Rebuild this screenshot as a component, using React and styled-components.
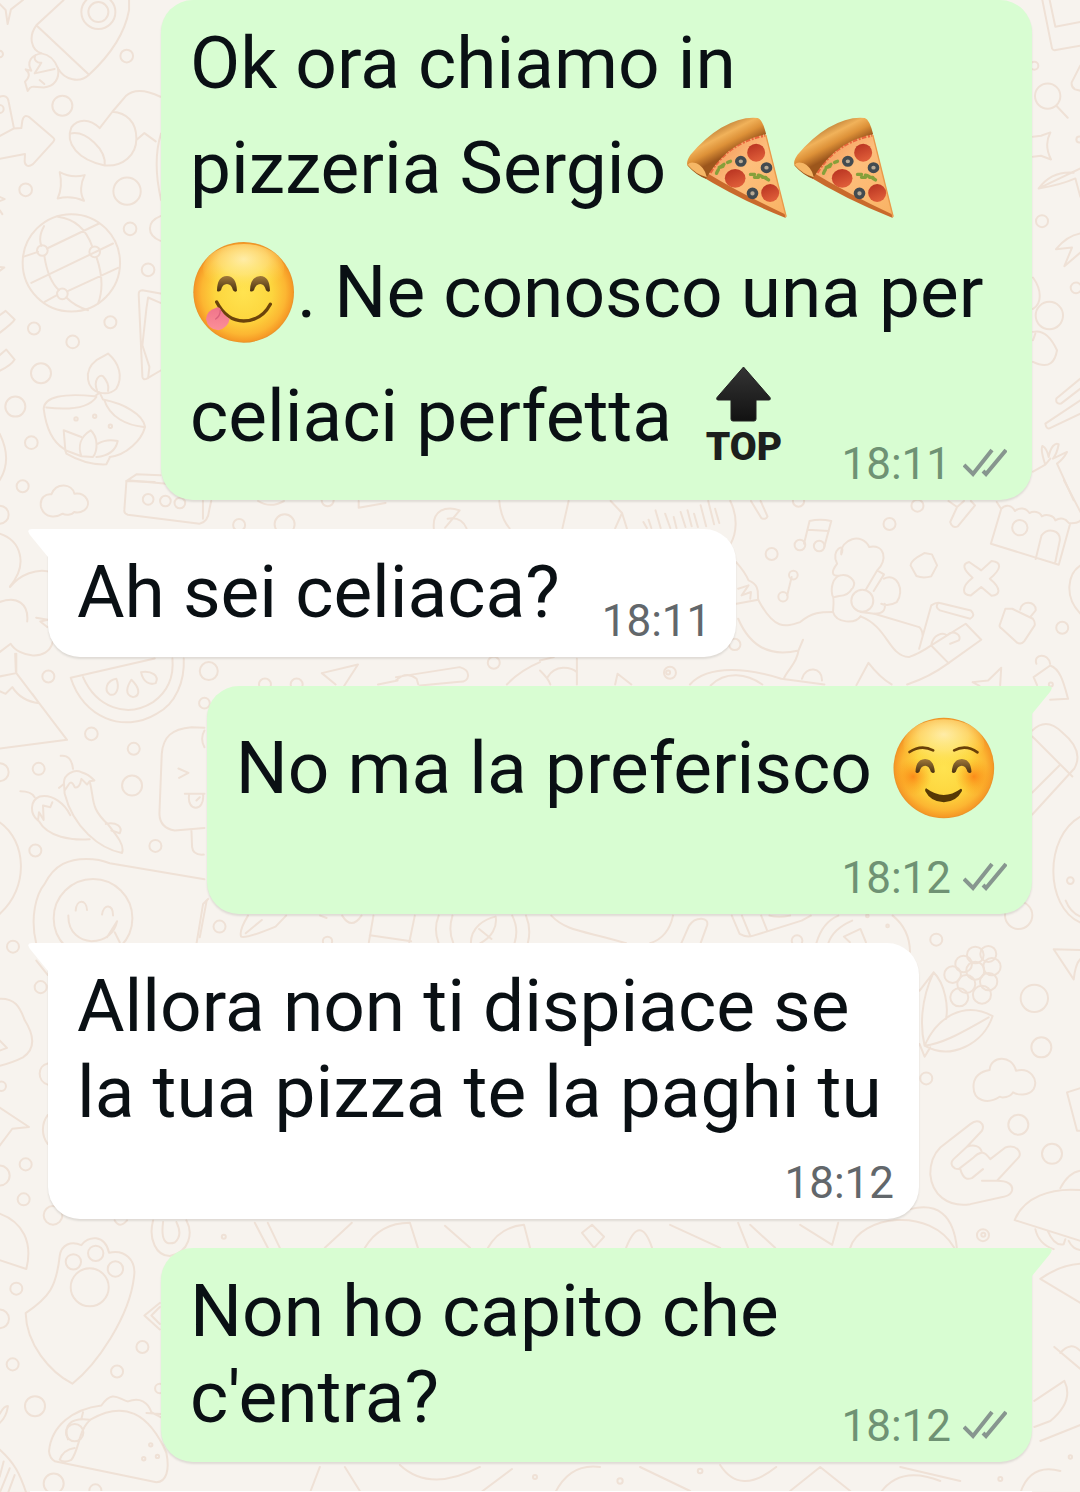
import React from 'react';
import styled, { createGlobalStyle, css } from 'styled-components';

const GlobalStyle = createGlobalStyle`
  *, *::before, *::after { box-sizing: border-box; }
  body { margin: 0; background: #f7f3ee; }
`;

const Page = styled.main`
  position: relative;
  min-height: 100vh;
  overflow: hidden;
  background: #f7f3ee;
  font-family: Roboto, "Liberation Sans", sans-serif;
`;

const Wallpaper = styled.svg`
  position: absolute;
  inset: 0;
  width: 100%;
  height: 100%;
  fill: none;
  stroke: #efe1d6;
  stroke-linecap: round;
  stroke-linejoin: round;

  path, circle, ellipse {
    vector-effect: non-scaling-stroke;
    stroke-width: 2px;
  }
`;

const Thread = styled.div`
  position: relative;
  display: flex;
  flex-direction: column;
  gap: 29px;
  padding: 0 48px;
`;

const layouts = {
  over: css`
    display: grid;
    > p, > footer { grid-area: 1 / 1; }
  `,
  beside: css`
    display: flex;
    align-items: flex-end;
    gap: 32px;
  `,
  below: css`
    display: flex;
    flex-direction: column;
    gap: 10px;
  `,
};

const Bubble = styled.article`
  position: relative;
  max-width: 871px;
  padding: 20px 25px 10px 29px;
  border-radius: 32px;
  align-self: ${(p) => (p.$sent ? 'flex-end' : 'flex-start')};
  color: ${(p) => (p.$sent ? '#6f9274' : '#62676b')};
  background: ${(p) => (p.$sent ? '#d8fdd2' : '#ffffff')};
  box-shadow: 0 2px 2px rgba(60, 50, 40, 0.12);
  ${(p) => p.$tail && (p.$sent ? 'border-top-right-radius: 0;' : 'border-top-left-radius: 0;')}
  ${(p) => layouts[p.$layout]}
`;

const TailShape = styled.svg`
  position: absolute;
  top: 0;
  width: 22px;
  height: 30px;
  ${(p) => (p.$sent ? 'right: -20px; transform: scaleX(-1); fill: #d8fdd2;' : 'left: -20px; fill: #ffffff;')}
`;

const Text = styled.p`
  margin: 0 0 12px;
  padding-right: 10px;
  color: #0a1014;
  font-size: 73px;
  line-height: 86px;
`;

const Meta = styled.footer`
  display: flex;
  align-items: center;
  align-self: end;
  justify-self: end;
  gap: 12px;
  height: 52px;
  font-size: 44px;
  line-height: 52px;
`;

const TickIcon = styled.svg`
  width: 44px;
  height: 34px;
  fill: none;
  stroke: #87968f;
  stroke-width: 4px;
`;

const EmojiArt = styled.svg`
  width: 107px;
  height: 102px;
  margin: 11px 0;
  overflow: visible;
  vertical-align: -37px;
`;

const PeekBubble = styled.div`
  align-self: stretch;
  height: 2px;
  margin-left: -18px;
  background: #ffffff;
`;

function Tail({ sent }) {
  return (
    <TailShape $sent={sent} viewBox="0 0 22 30" aria-hidden="true">
      <path d="M4 0H22V30L20 28L2 6Q-2 0 4 0Z" />
    </TailShape>
  );
}

function Ticks() {
  return (
    <TickIcon viewBox="0 0 44 34" role="img" aria-label="Consegnato">
      <path d="M1 18L10 27L29 3M20 24L23 27L43 3" />
    </TickIcon>
  );
}

function Pizza() {
  return (
    <EmojiArt viewBox="0 0 107 102" role="img" aria-label="pizza">
      <defs>
        <linearGradient id="crust" gradientUnits="userSpaceOnUse" x1="120" y1="85" x2="158" y2="158">
          <stop offset="0" stopColor="#c98a3e" />
          <stop offset=".3" stopColor="#f1b25a" />
          <stop offset=".62" stopColor="#dd9138" />
          <stop offset="1" stopColor="#9c561c" />
        </linearGradient>
        <linearGradient id="cheese" x1="0" y1="0" x2="1" y2="1">
          <stop offset="0" stopColor="#f08a50" />
          <stop offset=".45" stopColor="#fdbf7c" />
          <stop offset="1" stopColor="#f9b263" />
        </linearGradient>
        <linearGradient id="salami" x1="0" y1="0" x2=".4" y2="1">
          <stop offset="0" stopColor="#b5301f" />
          <stop offset="1" stopColor="#de5c38" />
        </linearGradient>
      </defs>
      <g transform="translate(-5.5 -17) scale(.3333)">
        <path d="M82 226L324 352L262 103Q160 115 82 226Z" fill="url(#cheese)" />
        <path d="M58 222Q180 298 322 354L318 342Q190 282 84 218Z" fill="#c96a2c" />
        <path d="M95 218Q150 126 260 106" fill="none" stroke="#e9653c" strokeWidth="9" strokeDasharray="14 5 6 4" />
        <path d="M27 197Q22 184 36 164Q80 112 128 83Q190 48 238 54Q252 58 263 103Q205 112 151 153Q110 188 82 236Q54 226 27 197Z" fill="url(#crust)" />
        <path d="M28 194Q34 184 54 190Q78 200 85 232Q50 222 28 194Z" fill="#f6b766" />
        <path d="M262 105L323 350" fill="none" stroke="#e99a4b" strokeWidth="4" />
        <g fill="url(#salami)">
          <circle cx="233" cy="158" r="27" />
          <ellipse cx="170" cy="235" rx="31" ry="28" />
          <circle cx="275" cy="279" r="27" />
        </g>
        <g fill="#b9aa94" stroke="#434b50" strokeWidth="11">
          <ellipse cx="187" cy="184" rx="12" ry="11" />
          <ellipse cx="264" cy="203" rx="12" ry="11" />
          <ellipse cx="222" cy="280" rx="12" ry="12" />
        </g>
        <g fill="none" stroke="#86a03a" strokeWidth="10" strokeLinecap="round" strokeDasharray="12 12">
          <path d="M114 220Q124 194 156 184" />
          <path d="M122 202L144 196" />
          <path d="M216 223Q244 222 270 240" />
          <path d="M228 232L262 232" />
        </g>
      </g>
    </EmojiArt>
  );
}

function FaceDefs() {
  return (
    <defs>
      <radialGradient id="skin" cx=".5" cy=".5" r=".51">
        <stop offset="0" stopColor="#ffe350" />
        <stop offset=".55" stopColor="#fdd63e" />
        <stop offset=".82" stopColor="#fcb632" />
        <stop offset=".95" stopColor="#f69a26" />
        <stop offset="1" stopColor="#dc8c2c" />
      </radialGradient>
      <radialGradient id="shine" cx=".5" cy=".3" r=".6">
        <stop offset="0" stopColor="#fff0b4" stopOpacity=".9" />
        <stop offset=".5" stopColor="#ffeb90" stopOpacity=".6" />
        <stop offset="1" stopColor="#ffe455" stopOpacity="0" />
      </radialGradient>
      <linearGradient id="eye" x1="0" y1="0" x2="0" y2="1">
        <stop offset="0" stopColor="#a0793a" />
        <stop offset="1" stopColor="#49300f" />
      </linearGradient>
      <radialGradient id="blush">
        <stop offset="0" stopColor="#fb7a12" stopOpacity=".8" />
        <stop offset="1" stopColor="#fb9a12" stopOpacity="0" />
      </radialGradient>
      <linearGradient id="tongue" x1="0" y1="0" x2="0" y2="1">
        <stop offset="0" stopColor="#f0748a" />
        <stop offset="1" stopColor="#fb8f98" />
      </linearGradient>
    </defs>
  );
}

function YumFace() {
  return (
    <EmojiArt viewBox="0 0 107 102" role="img" aria-label="gustoso">
      <FaceDefs />
      <g transform="translate(-9 -11) scale(.3333)">
        <circle cx="188" cy="187" r="151" fill="url(#skin)" />
        <ellipse cx="188" cy="118" rx="122" ry="76" fill="url(#shine)" />
        <path d="M108 182Q108 139 138 138Q166 139 168 182Q163 189 156 181Q151 162 138 162Q124 162 120 181Q112 188 108 182Z" fill="url(#eye)" />
        <path d="M207 182Q208 139 238 138Q266 139 267 182Q262 189 255 181Q250 162 238 162Q224 162 219 181Q211 188 207 182Z" fill="url(#eye)" />
        <path d="M107 216Q136 272 188 273Q242 272 268 223" fill="none" stroke="#6b430b" strokeWidth="10" strokeLinecap="round" />
        <path d="M104 234Q76 242 75 268Q80 298 112 301Q142 292 146 266Q128 256 116 234Q110 230 104 234Z" fill="url(#tongue)" />
        <path d="M118 240Q118 258 104 267" fill="none" stroke="#d9607c" strokeWidth="4" strokeLinecap="round" />
      </g>
    </EmojiArt>
  );
}

function BlushFace() {
  return (
    <EmojiArt viewBox="0 0 107 102" role="img" aria-label="sorriso">
      <g transform="translate(-9.5 -37) scale(.3333)">
        <circle cx="190" cy="264" r="151" fill="url(#skin)" />
        <ellipse cx="190" cy="194" rx="122" ry="76" fill="url(#shine)" />
        <circle cx="98" cy="290" r="56" fill="url(#blush)" />
        <circle cx="280" cy="290" r="56" fill="url(#blush)" />
        <path d="M87 216Q122 192 158 211M221 211Q256 192 291 217" fill="none" stroke="#694008" strokeWidth="8" strokeLinecap="round" />
        <path d="M105 276Q106 238 134 237Q160 238 163 276Q158 283 151 275Q146 257 134 257Q121 257 117 275Q110 283 105 276Z" fill="url(#eye)" />
        <path d="M214 276Q216 238 244 237Q271 238 273 276Q268 283 261 275Q256 257 244 257Q231 257 226 275Q219 283 214 276Z" fill="url(#eye)" />
        <path d="M137 325Q189 364 241 326Q246 326 244 334Q227 366 190 367Q151 366 134 333Q133 326 137 325Z" fill="#563805" />
      </g>
    </EmojiArt>
  );
}

const TopLabel = styled.text`
  font: 900 39px Roboto, sans-serif;
  text-anchor: middle;
  fill: #1c1f1d;
`;

function TopArrow() {
  return (
    <EmojiArt viewBox="0 0 107 102" role="img" aria-label="top">
      <defs>
        <linearGradient id="arrow" x1="0" y1="0" x2="0" y2="1">
          <stop offset="0" stopColor="#343434" />
          <stop offset="1" stopColor="#121212" />
        </linearGradient>
      </defs>
      <path
        d="M53.5 2L80 32.5Q81 35 79 35H66V54Q66 56 64 56H43Q41 56 41 54V35H28Q26 35 27 32.5Z"
        fill="url(#arrow)"
        stroke="#222"
        strokeLinejoin="round"
      />
      <TopLabel x="54" y="95">TOP</TopLabel>
    </EmojiArt>
  );
}

/* One region of doodles, drawn in its own local units. */
function Doodles({ x, y, sx = 3, sy = 3, paths, dots = [] }) {
  return (
    <g transform={`translate(${x} ${y}) scale(${1 / sx} ${1 / sy})`}>
      {paths.map((d) => <path key={d} d={d} />)}
      {dots.map(([cx, cy, r]) => (
        <ellipse key={`${cx}-${cy}`} cx={cx} cy={cy} rx={(r * sx) / 3} ry={(r * sy) / 3} />
      ))}
    </g>
  );
}

const regions = [
  {
    x: 0, y: 0,
    dots: [[296,36,51],[296,36,30],[381,168,19],[188,317,30],[78,569,19],[382,573,41],[391,686,19],[445,809,19],[332,966,18],[103,985,18],[219,1025,19],[124,1119,30],[47,1219,30],[95,1327,19],[69,1458,18],[215,788,146],[128,751,16],[285,755,16],[188,881,16],[229,1256,5],[285,1248,5],[332,1278,5],[0,162,10],[0,327,12]],
    paths: [
      'M0 12L18 30L24 72L34 28L70 0',
      'M192 0L110 76C85 110 95 150 125 160Q160 165 175 205C195 240 240 250 268 224Q370 130 388 30L388 0M110 76L268 224',
      'M125 160C95 165 80 185 95 212L78 208Q98 225 76 245L84 273C95 252 105 262 132 262C165 260 180 235 175 205M108 165C98 180 115 190 125 188L105 220L165 207M120 240L134 252',
      'M0 290C15 285 25 290 27 305L43 385M0 408L43 385L65 384L68 362C72 345 80 345 90 352L160 412Q168 418 160 426L100 492C85 502 76 497 75 484L76 462L0 476',
      'M300 384C270 355 235 355 215 382C195 430 235 480 315 496C370 500 410 465 410 415C410 365 380 338 338 335L300 384M212 400C260 390 320 450 315 496M338 335L378 288C400 268 430 265 482 290M410 420L434 399L468 424M484 400C465 460 468 530 484 600',
      'M180 516Q215 535 255 525C242 550 240 580 253 602Q215 585 174 595Q190 560 180 516Z',
      'M133 678Q115 710 125 737M175 650Q250 660 278 740M70 770L115 755M142 745L298 670M95 848L340 730M204 873L355 803M134 767Q145 840 178 870M290 770Q318 850 295 910M173 884L135 905M200 892Q225 918 265 930',
      'M0 945L18 932L45 958Q40 968 0 998M0 1065L20 1048L45 1078Q35 1095 0 1112M0 1300C25 1350 25 1400 0 1440M0 590L15 597L0 603M0 630L8 642M0 800L14 802L0 812',
      'M482 880L428 870Q416 870 417 885L428 1130Q430 1140 440 1136L484 1110M482 908L445 892L440 925L428 1035L449 1100L445 1134M482 648C440 665 440 705 482 722',
      'M300 1177C260 1170 250 1110 290 1080L325 1060C360 1090 370 1130 350 1165Q330 1185 300 1177M292 1170C280 1140 300 1120 310 1128Q330 1150 325 1172',
      'M132 1225C135 1190 190 1178 285 1188L300 1177L310 1198C370 1210 430 1240 436 1280C425 1320 380 1365 330 1370M132 1225C140 1290 160 1325 192 1345M140 1222Q260 1235 290 1190M314 1200C330 1250 380 1275 432 1280',
      'M192 1290L197 1350L245 1368C235 1340 240 1310 273 1290C295 1310 295 1350 280 1370L245 1368M245 1310L192 1290M295 1330Q320 1315 354 1322Q345 1365 290 1370M195 1345L200 1360Q260 1395 320 1392L330 1372',
      'M380 1442L410 1422L482 1425M384 1440L500 1450',
    ],
  },
  {
    x: 1020, y: 0,
    dots: [[82,288,38],[65,663,18],[87,946,41],[167,863,16],[42,197,12],[177,418,9]],
    paths: [
      'M66 0L95 145Q98 152 106 150L180 137M88 0L105 80L180 66M180 196L154 247Q152 260 164 268L180 272',
      'M108 317L142 353M38 410L62 407L90 397Q70 435 92 478L62 467L38 470M180 505L55 565C85 525 125 515 160 518M55 565Q120 555 165 535L180 590',
      'M180 700C150 705 125 725 107 747L155 742L132 798L180 757M38 832C65 870 65 910 38 926M38 995Q80 985 110 1050C105 1080 90 1110 38 1085M45 1000L38 1020',
      'M180 1135L108 1195Q105 1212 122 1210L180 1165M180 1200L75 1270Q78 1290 92 1282L180 1240M38 1414L75 1393Q60 1350 66 1337Q80 1345 85 1370C90 1340 105 1325 115 1332Q110 1360 98 1375L140 1355Q130 1375 110 1390L160 1500M75 1393L90 1375',
    ],
  },
  {
    x: 0, y: 480, sx: 2.904,
    dots: [[431,57,16],[481,62,16],[523,68,16],[695,134,18],[827,132,30],[1434,547,18],[770,612,18],[862,612,18],[0,103,27],[952,60,18]],
    paths: [
      'M150 42C165 5 210 10 217 40C250 35 270 70 245 90Q230 100 216 95C210 105 190 105 183 100C165 112 130 115 120 80C115 50 135 40 150 42Z',
      'M368 2L362 88Q360 100 372 103L580 130Q605 125 608 90L614 62M368 2L450 5M590 62L590 115',
      'M0 160C60 180 85 250 30 318M30 320C60 280 110 265 140 273M0 365C50 345 85 370 80 423M106 412L140 418L118 423L138 440M0 515L32 490C55 530 140 545 154 485M45 520L47 573',
      'M750 62Q785 85 825 62M1042 62L1042 82L1120 68M1260 144C1255 90 1295 75 1335 90L1293 142M1300 115Q1340 108 1355 144M1450 62Q1455 115 1480 144',
      'M935 578L1040 552L1000 616M935 578L975 612M1150 590L1335 560C1370 570 1365 605 1335 604L1220 615M1150 600Q1180 570 1210 595L1215 612M1098 612L1155 600M1472 612Q1510 570 1568 545',
    ],
  },
  {
    x: 540, y: 480, sx: 2.903,
    dots: [[1095,76,18],[1014,131,18],[672,221,18],[377,577,18],[565,492,17],[1515,442,18],[754,194,16],[810,197,16],[705,349,14],[735,284,13],[1392,142,23],[935,361,33],[750,62,17],[1482,612,6]],
    paths: [
      'M0 540L40 530M65 144L83 62M205 62L238 98L218 144M238 98L252 144M300 125L310 143M315 118L323 143M335 90L350 143M363 100L378 143M388 110L396 143M408 95L422 140M428 90L440 138M447 100L458 140M466 75L482 138M488 62L505 132M508 85L520 128M552 62C575 110 570 160 553 190M612 62L642 113Q655 120 660 108L640 62',
      'M766 190L782 122Q812 115 845 122L824 202M777 148L838 152M717 345L730 290M1185 62L1210 80L1190 125Q1195 145 1212 138L1262 75L1250 62M1210 80L1230 62',
      'M862 250C840 210 890 180 874 222C870 175 935 155 955 200C1000 190 1010 240 978 270L945 328M862 250C840 280 850 290 872 285C895 280 920 300 908 322M872 285C850 290 843 320 848 345C855 350 850 390 850 395C860 430 915 430 930 408M978 270L998 282L968 332M998 295C1035 275 1060 330 1035 365Q1010 380 990 370M1000 370Q1005 400 970 400L930 395M855 350L868 347Q895 345 905 325',
      'M1115 218L1095 230Q1075 245 1075 255L1092 287Q1112 295 1135 288L1152 255L1137 222ZM1245 245C1225 250 1225 265 1255 292C1220 320 1225 345 1250 345L1280 320L1310 346C1335 345 1340 325 1305 295C1340 265 1340 245 1310 242L1280 270Z',
      'M1325 65L1338 86C1350 70 1370 75 1378 92C1390 80 1410 82 1420 98C1430 92 1450 92 1456 108C1470 100 1490 105 1495 120C1510 110 1525 115 1534 128Q1560 130 1568 120M1338 86L1308 190L1505 253L1538 130M1438 236L1455 165C1475 140 1510 150 1508 180L1495 245M1520 0L1568 95M1568 255C1530 280 1520 350 1568 400',
      'M1350 385L1335 430Q1330 440 1340 445L1382 485Q1395 495 1405 482L1435 435Q1437 425 1430 415L1370 385ZM1393 388C1395 360 1440 360 1438 390L1422 410M569 245Q595 275 605 300C640 315 630 340 633 358L570 370M575 325L605 315L585 345L612 335L610 355',
      'M633 358C680 450 710 440 755 425C790 395 815 395 850 395M930 408C1010 440 1010 525 1070 530Q1100 520 1135 495M970 400L1100 440Q1110 450 1110 465M575 415C610 500 670 530 750 510L763 478M750 510C745 550 720 565 708 593M1100 505L1135 375Q1150 365 1160 368L1250 390Q1265 405 1248 415L1160 390Q1145 380 1155 368M1135 495L1235 430L1280 478L1185 548L1135 495C1140 460 1170 455 1180 465C1200 445 1225 465 1215 480L1190 490',
      'M918 614L953 547Q985 590 1020 612M1065 612Q1130 590 1185 548M435 612C490 550 610 565 700 595L825 612M495 615C540 570 600 580 645 612M760 595C770 555 820 560 818 600M1255 605L1300 600L1338 562L1335 614M1255 605L1275 616M1442 614L1432 590L1480 555C1510 565 1520 610 1532 655L1480 658M1440 550C1430 520 1475 515 1480 550M225 580L218 612M225 580L265 612M0 570Q25 595 30 612M22 590C45 550 90 560 107 575M107 535L107 612',
    ],
  },
  {
    x: 0, y: 650,
    dots: [[146,78,18],[275,250,19],[402,295,18],[397,405,30],[117,355,18],[107,600,18],[467,586,18],[40,888,18],[280,803,118],[614,158,16],[0,365,27],[627,62,27]],
    paths: [
      'M50 10L50 68L0 78M50 68L202 268L0 294M0 122L18 130L38 110Q65 152 118 158L98 130',
      'M213 82L465 24M213 82C250 200 370 250 470 190C530 160 555 90 552 24M250 80C290 170 380 205 460 155C510 120 522 70 518 24',
      'M350 85C320 90 312 120 330 132C352 138 360 110 350 85ZM395 88C380 110 375 135 400 140C425 135 418 110 395 88ZM424 65C430 95 450 105 468 98C480 75 455 60 424 65Z',
      'M183 316Q215 312 220 355M193 400C190 370 225 355 245 365C265 370 275 380 284 390L270 392C285 450 270 470 325 522C355 560 375 585 367 607C300 595 220 530 195 430ZM178 412Q195 400 193 395M270 392L262 402L245 385Q240 415 225 410Q215 385 205 405L195 420',
      'M62 422Q95 422 105 440M115 510C90 490 90 450 120 438C160 430 195 460 212 494M115 510L118 485L132 508L130 465L152 470L158 455M118 512C145 560 215 570 270 566M318 520C350 512 370 530 360 548L335 540',
      'M614 232L575 230C515 235 490 260 486 310L479 490C480 520 495 535 525 540L614 532M575 540L577 590Q580 615 612 612M536 354L566 367L538 382M555 430L614 430M568 432C560 485 615 485 610 432M590 450L600 440M614 240Q600 265 614 290',
      'M0 515C80 570 90 710 0 790M110 880C90 800 110 730 135 700C165 640 210 625 260 625Q300 625 330 638L614 686M228 780C230 745 260 745 262 778M307 792C312 758 340 760 340 795M206 795C205 850 245 870 275 872C320 870 345 845 352 812M352 812L322 860M345 845L360 875M590 880L610 760L625 745',
    ],
  },
  {
    x: 910, y: 900,
    dots: [[78,117,18],[372,293,41],[393,440,30],[324,672,30],[425,759,30],[48,533,18],[218,1003,18],[325,44,41],[127,222,25],[160,190,25],[195,163,25],[234,160,24],[245,198,26],[195,210,27],[168,250,27],[147,290,27],[235,243,26],[215,282,27]],
    paths: [
      'M28 270L70 215C105 250 115 320 107 355M70 215C30 300 30 380 43 435M43 435C80 350 160 300 247 346C220 430 120 480 43 435C90 430 140 405 235 350M28 430L43 468L60 440',
      'M238 508C240 465 305 460 317 510C360 500 385 535 370 565C355 588 320 582 308 575C300 590 275 592 268 588C235 610 185 605 190 550Q195 515 238 508Z',
      'M90 740L180 670C205 650 225 670 215 690L170 738C190 730 210 735 215 755Q225 755 240 775L285 740C320 730 335 755 325 770L260 840C290 840 310 850 305 870C300 885 290 885 280 888L180 910C110 920 65 880 60 820C60 790 70 760 90 740ZM170 738L130 775C115 790 130 805 145 805L190 770Q200 758 215 755M150 805C160 840 175 835 185 832L218 805M260 840L215 840',
      'M510 148L430 146L490 236Q495 190 510 175M466 0Q480 35 510 48M510 562L470 575L500 690L510 690M510 868C420 860 340 890 313 958L510 1020M450 862Q475 815 510 810M375 985Q385 1030 430 1045M412 990C425 1020 440 1035 460 1030L465 1015M475 1020C485 1040 495 1045 510 1048',
      'M0 925C80 905 130 940 140 1044',
    ],
  },
  {
    x: 0, y: 960, sy: 2.947,
    dots: [[123,78,18],[78,600,18],[72,703,18],[160,750,28],[50,966,18],[39,1189,18],[352,1210,18],[428,1138,18],[106,1312,30],[162,1540,30],[287,1560,18],[221,887,23],[288,862,23],[347,908,23],[270,962,57],[0,633,30],[0,1055,28],[5,370,14],[453,1426,5],[432,1467,5],[473,1460,5],[225,1390,26],[480,1260,14]],
    paths: [
      'M0 112C45 110 60 135 75 175C110 230 100 265 70 285Q40 300 0 310M0 235L22 257L0 265M0 433L88 490L38 495L0 545M0 745C70 770 100 830 80 908L0 882M144 303C112 310 112 355 144 365M144 455C125 480 125 515 144 540M110 0L144 42',
      'M180 870C185 835 215 825 245 838C265 810 315 805 328 860C375 850 410 880 403 930C390 1050 290 1190 218 1246C150 1210 80 1130 78 1038C150 990 170 960 180 870',
      'M460 765C445 820 470 870 510 870C570 860 580 800 560 765M490 770Q480 845 525 830Q550 810 530 770M480 1008L434 1045L480 1086M480 1020L455 1045L480 1070M345 765Q360 790 382 765',
      'M0 1335Q15 1310 25 1312Q20 1345 0 1362M0 1440C45 1480 60 1510 80 1568M0 1520L12 1475M0 1568L30 1495M25 1568L45 1515',
      'M148 1445C155 1370 220 1320 305 1310C340 1260 360 1295 385 1298C420 1285 445 1300 455 1330L484 1345M165 1474L470 1536C500 1535 510 1500 500 1450Q420 1270 275 1350C235 1380 240 1440 215 1470Q195 1480 180 1470Q190 1440 225 1435M148 1445Q150 1465 165 1474M205 1410C190 1370 210 1345 270 1352M250 1330L245 1350M440 1332L484 1335',
    ],
  },
  {
    x: 200, y: 900, sx: 2.178,
    dots: [[43,78,18],[1300,120,16],[278,122,14],[1497,76,4],[1453,46,4]],
    paths: [
      'M15 0L0 110M105 45Q85 90 90 108Q100 115 165 78L188 45M100 98L135 58M262 45L276 52M310 45Q330 90 352 45M378 45L368 125M468 45L456 125M370 104L460 122M520 45Q508 85 520 128M550 45Q540 90 552 128M590 128C590 80 620 55 644 48C648 80 635 110 610 128M608 85L635 115M680 45Q695 85 685 128M710 45Q722 85 714 128',
      'M765 45C800 95 840 90 928 128M1030 45Q1020 110 980 128M1048 128L1065 75C1080 45 1110 50 1104 75L1090 128M1158 45L1175 100Q1190 112 1205 105L1310 60L1330 45M1180 45L1198 105M1222 45L1235 90M1240 45Q1260 52 1285 45M1342 128Q1355 65 1390 45M1368 128Q1378 85 1420 60M1415 125L1402 108L1438 85L1450 125M1508 45Q1545 85 1546 155',
    ],
  },
  {
    x: 0, y: 0, sx: 1, sy: 1,
    dots: [[668,672,6],[1070,880,10],[224,1236,6],[983,1234,6],[535,1476,6],[700,1470,7],[1000,1478,6],[1070,1456,5],[620,1480,8]],
    paths: [
      'M1032 730Q1046 716 1062 732Q1084 750 1074 768L1032 814M1032 736L1072 776M1060 764L1032 792M1080 816C1044 836 1044 906 1080 922',
      'M255 1222L268 1247M268 1222L280 1247M325 1247L352 1222M365 1247Q380 1222 410 1222L418 1247M445 1225L470 1247M488 1247Q500 1226 524 1224L530 1247M582 1232L592 1224L604 1236L594 1247ZM626 1247Q640 1212 652 1247M670 1224L720 1247M738 1222L748 1247M750 1224L775 1247M800 1224L832 1244L838 1222',
      'M850 1247C860 1215 930 1205 954 1247M1080 1263Q1060 1264 1040 1278L1080 1302M1054 1346L1080 1368M1060 1352Q1070 1340 1080 1350M1034 1400L1064 1380Q1074 1400 1050 1420L1034 1426M1040 1440L1080 1424',
      'M310 1492L320 1466M345 1466L360 1490M400 1464Q430 1492 480 1466M480 1492L512 1468M555 1492Q570 1462 600 1466M640 1466L690 1490M720 1464Q740 1495 776 1466M790 1490L820 1466L850 1490M880 1492Q900 1464 940 1480M900 1466L960 1480M1020 1492Q1030 1462 1060 1470',
    ],
  },
];

const messages = [
  {
    time: '18:11', sent: true, tail: false, layout: 'over',
    body: <>Ok ora chiamo in<br />pizzeria Sergio <Pizza /><Pizza /><YumFace />. Ne conosco una per celiaci perfetta <TopArrow /></>,
  },
  { time: '18:11', sent: false, tail: true, layout: 'beside', body: 'Ah sei celiaca?' },
  { time: '18:12', sent: true, tail: true, layout: 'below', body: <>No ma la preferisco <BlushFace /></> },
  { time: '18:12', sent: false, tail: true, layout: 'below', body: 'Allora non ti dispiace se la tua pizza te la paghi tu' },
  { time: '18:12', sent: true, tail: true, layout: 'over', body: "Non ho capito che c'entra?" },
];

export default function App() {
  return (
    <Page>
      <GlobalStyle />
      <Wallpaper viewBox="0 0 1080 1492" preserveAspectRatio="xMidYMin slice" aria-hidden="true">
        {regions.map((region, i) => <Doodles key={i} {...region} />)}
      </Wallpaper>
      <Thread>
        {messages.map((m, i) => (
          <Bubble key={i} $sent={m.sent} $tail={m.tail} $layout={m.layout}>
            <Text>{m.body}</Text>
            <Meta>
              <time>{m.time}</time>
              {m.sent && <Ticks />}
            </Meta>
            {m.tail && <Tail sent={m.sent} />}
          </Bubble>
        ))}
        <PeekBubble />
      </Thread>
    </Page>
  );
}
